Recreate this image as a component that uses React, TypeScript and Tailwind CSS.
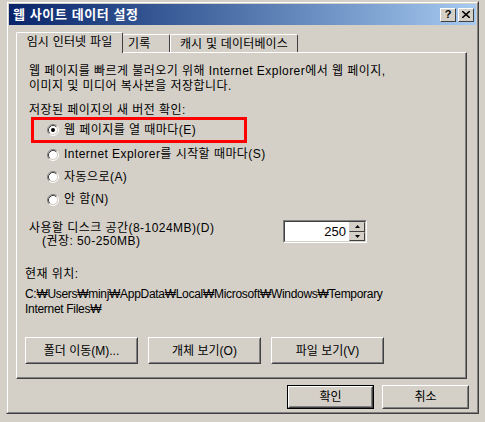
import React from 'react';

const ui = "[font-family:'Liberation_Sans','Noto_Sans_CJK_KR',sans-serif]";

function Radio({ checked }: { checked?: boolean }) {
  return (
    <svg width="12" height="12" viewBox="0 0 12 12" className="shrink-0">
      <circle cx="6" cy="6" r="4.5" fill="#ffffff" />
      <path d="M2.11 9.89 A5.5 5.5 0 0 1 9.89 2.11" fill="none" stroke="#808080" strokeWidth="1" />
      <path d="M9.89 2.11 A5.5 5.5 0 0 1 2.11 9.89" fill="none" stroke="#ffffff" strokeWidth="1" />
      <path d="M2.82 9.18 A4.5 4.5 0 0 1 9.18 2.82" fill="none" stroke="#404040" strokeWidth="1" />
      <path d="M9.18 2.82 A4.5 4.5 0 0 1 2.82 9.18" fill="none" stroke="#d4d0c8" strokeWidth="1" />
      {checked && <circle cx="6" cy="6" r="2" fill="#000000" />}
    </svg>
  );
}

function Button({ children, className = '', isDefault = false }: { children: React.ReactNode; className?: string; isDefault?: boolean }) {
  return (
    <div className={`${isDefault ? 'border border-black' : ''} ${className}`}>
      <div className="h-full border border-t-white border-l-white border-r-[#404040] border-b-[#404040]">
        <div className="h-full border border-t-[#d4d0c8] border-l-[#d4d0c8] border-r-[#808080] border-b-[#808080] flex items-center justify-center text-[12px] text-black">
          {children}
        </div>
      </div>
    </div>
  );
}

function CaptionButton({ children }: { children: React.ReactNode }) {
  return (
    <div className="w-[16px] h-[14px] bg-[#d4d0c8] border border-t-white border-l-white border-r-[#404040] border-b-[#404040] flex items-center justify-center">
      {children}
    </div>
  );
}

export default function App() {
  return (
    <div className={`w-[485px] h-[422px] bg-[#d4d0c8] pl-[6px] pt-[1px] ${ui}`}>
      {/* Window frame */}
      <div className="w-[473px] h-[413px] border border-t-[#d4d0c8] border-l-[#d4d0c8] border-r-[#404040] border-b-[#404040]">
        <div className="h-full border border-t-white border-l-white border-r-[#808080] border-b-[#808080] p-px flex flex-col">
          {/* Title bar */}
          <div className="h-[21px] bg-gradient-to-r from-[#0a246a] to-[#a6caf0] flex items-center justify-between pl-[4px] pr-[2px]">
            <span className="text-white font-bold text-[13px] leading-none tracking-[0.6px]">웹 사이트 데이터 설정</span>
            <div className="flex gap-[2px]">
              <CaptionButton>
                <span className="text-[11px] font-bold leading-none text-black">?</span>
              </CaptionButton>
              <CaptionButton>
                <svg width="8" height="7" viewBox="0 0 8 7">
                  <path d="M0 0 L8 7 M8 0 L0 7" stroke="#000" strokeWidth="1.6" />
                </svg>
              </CaptionButton>
            </div>
          </div>

          {/* Body */}
          <div className="flex-1 px-[7px] pt-[7px] flex flex-col">
            {/* Tabs */}
            <div className="flex items-end h-[20px] relative z-10 tracking-[0.2px]">
              <div className="w-[107px] h-[21px] -mb-px bg-[#d4d0c8] border-t border-l border-t-white border-l-white border-r border-r-[#404040] rounded-t-[2px] flex items-center justify-center text-[12px] pb-[2px]">
                임시 인터넷 파일
              </div>
              <div className="w-[47px] h-[18px] border-t border-t-white border-r border-r-[#404040] rounded-t-[2px] flex items-center pl-[5px] text-[12px]">
                기록
              </div>
              <div className="w-[128px] h-[18px] border-t border-l border-t-white border-l-white border-r border-r-[#404040] rounded-t-[2px] flex items-center justify-center text-[12px]">
                캐시 및 데이터베이스
              </div>
            </div>

            {/* Tab page */}
            <div className="w-[451px] h-[327px] border border-t-white border-l-white border-r-[#404040] border-b-[#404040]">
              <div className="h-full border-r border-b border-r-[#808080] border-b-[#808080] flex flex-col pl-[12px] text-[12px] text-black tracking-[0.45px]">
                <div className="mt-[11px] leading-[15px]">
                  <div>웹 페이지를 빠르게 불러오기 위해 Internet Explorer에서 웹 페이지,</div>
                  <div>이미지 및 미디어 복사본을 저장합니다.</div>
                </div>
                <div className="mt-[9px] leading-[15px]">저장된 페이지의 새 버전 확인:</div>

                <div className="-mt-px ml-[2px] w-[216px] h-[26px] border-[3px] border-[#ff0000] flex items-center pl-[13px] gap-[5px]">
                  <Radio checked />
                  <span className="leading-[15px]">웹 페이지를 열 때마다(E)</span>
                </div>
                <div className="h-[23px] flex items-center pl-[18px] gap-[5px]">
                  <Radio />
                  <span className="leading-[15px]">Internet Explorer를 시작할 때마다(S)</span>
                </div>
                <div className="h-[22px] flex items-center pl-[18px] gap-[5px]">
                  <Radio />
                  <span className="leading-[15px]">자동으로(A)</span>
                </div>
                <div className="h-[23px] flex items-center pl-[18px] gap-[5px]">
                  <Radio />
                  <span className="leading-[15px]">안 함(N)</span>
                </div>

                <div className="mt-[11px] flex items-start">
                  <div className="leading-[13px] w-[254px]">
                    <div>사용할 디스크 공간(8-1024MB)(D)</div>
                    <div className="pl-[13px]">(권장: 50-250MB)</div>
                  </div>
                  <div className="-mt-[2px] w-[84px] h-[23px] border border-t-[#808080] border-l-[#808080] border-r-white border-b-white">
                    <div className="h-full border border-t-[#404040] border-l-[#404040] border-r-[#d4d0c8] border-b-[#d4d0c8] bg-white flex">
                      <div className="flex-1 flex items-center justify-end pr-[3px] text-[13px] leading-none tracking-normal">250</div>
                      <div className="w-[16px] flex flex-col bg-[#d4d0c8]">
                        <div className="flex-1 border border-t-[#d4d0c8] border-l-[#d4d0c8] border-r-[#404040] border-b-[#404040] flex items-center justify-center">
                          <svg width="5" height="3" viewBox="0 0 5 3"><path d="M2.5 0 L5 3 L0 3 Z" fill="#000" /></svg>
                        </div>
                        <div className="flex-1 border border-t-[#d4d0c8] border-l-[#d4d0c8] border-r-[#404040] border-b-[#404040] flex items-center justify-center">
                          <svg width="5" height="3" viewBox="0 0 5 3"><path d="M0 0 L5 0 L2.5 3 Z" fill="#000" /></svg>
                        </div>
                      </div>
                    </div>
                  </div>
                </div>

                <div className="-ml-[4px] mt-[19px] leading-[15px]">현재 위치:</div>
                <div className="-ml-[4px] mt-[5px] leading-[15px] text-[12px] tracking-[-0.3px] [font-family:'Liberation_Sans','DejaVu_Sans',sans-serif]">
                  <div>C:₩Users₩minj₩AppData₩Local₩Microsoft₩Windows₩Temporary</div>
                  <div>Internet Files₩</div>
                </div>

                <div className="-ml-[4px] mt-[20px] flex gap-[10px] tracking-normal">
                  <Button className="w-[113px] h-[27px]">폴더 이동(M)...</Button>
                  <Button className="w-[113px] h-[27px]">개체 보기(O)</Button>
                  <Button className="w-[113px] h-[27px]">파일 보기(V)</Button>
                </div>
              </div>
            </div>

            {/* Dialog buttons */}
            <div className="mt-[6px] flex justify-end gap-[8px]">
              <Button isDefault className="w-[87px] h-[24px]">확인</Button>
              <Button className="w-[87px] h-[24px]">취소</Button>
            </div>
          </div>
        </div>
      </div>
    </div>
  );
}
